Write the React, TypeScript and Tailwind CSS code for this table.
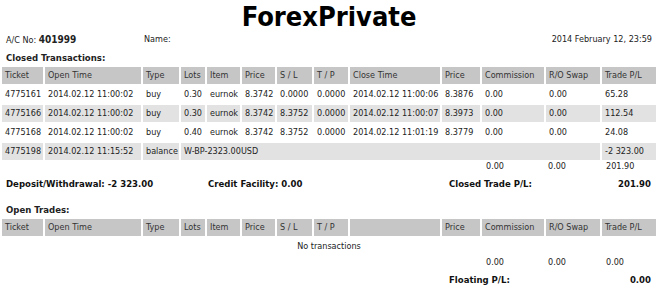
import React from "react";

const colCls = [
  "w-[41px]",
  "w-[96px]",
  "w-[36px]",
  "w-[24px]",
  "w-[33px]",
  "w-[33px]",
  "w-[35px]",
  "w-[34px]",
  "w-[90px]",
  "w-[38px]",
  "w-[62px]",
  "w-[54px]",
  "w-[54px]",
];

const th = "h-[17px] px-[3px] py-0 bg-[#c6c6c6] text-[#333] font-normal text-left whitespace-nowrap overflow-hidden";
const td = "h-[17px] px-[3px] py-0 text-[#222] whitespace-nowrap overflow-hidden";

const closedHead = ["Ticket", "Open Time", "Type", "Lots", "Item", "Price", "S / L", "T / P", "Close Time", "Price", "Commission", "R/O Swap", "Trade P/L"];
const openHead = ["Ticket", "Open Time", "Type", "Lots", "Item", "Price", "S / L", "T / P", "", "Price", "Commission", "R/O Swap", "Trade P/L"];

const rows = [
  ["4775161", "2014.02.12 11:00:02", "buy", "0.30", "eurnok", "8.3742", "0.0000", "0.0000", "2014.02.12 11:00:06", "8.3876", "0.00", "0.00", "65.28"],
  ["4775166", "2014.02.12 11:00:02", "buy", "0.30", "eurnok", "8.3742", "8.3752", "0.0000", "2014.02.12 11:00:07", "8.3973", "0.00", "0.00", "112.54"],
  ["4775168", "2014.02.12 11:00:02", "buy", "0.40", "eurnok", "8.3742", "8.3752", "0.0000", "2014.02.12 11:01:19", "8.3779", "0.00", "0.00", "24.08"],
];

function Cols() {
  return (
    <colgroup>
      {colCls.map((c, i) => (
        <col key={i} className={c} />
      ))}
    </colgroup>
  );
}

function SummaryNums({ a, b, c }: { a: string; b: string; c: string }) {
  return (
    <div className="flex h-[11px] items-center leading-[11px] text-[#222]">
      <div className="w-[486px] shrink-0" />
      <div className="w-[62px] shrink-0">{a}</div>
      <div className="w-[58px] shrink-0">{b}</div>
      <div>{c}</div>
    </div>
  );
}

export default function App() {
  return (
    <div className="w-[658px] h-[288px] overflow-hidden bg-white text-[9px] font-['DejaVu_Sans_Condensed','DejaVu_Sans',sans-serif] text-[#222]">
      <div className="h-[33px] flex items-center justify-center text-[27px] font-bold text-black leading-none">
        ForexPrivate
      </div>
      <div className="h-[14px] flex items-center px-[6px]">
        <div className="w-[138px]">
          A/C No: <span className="font-bold text-[10px]">401999</span>
        </div>
        <div className="flex-1">Name:</div>
        <div className="pr-[0px]">2014 February 12, 23:59</div>
      </div>
      <div className="h-[14px] mt-[4px] flex items-center px-[6px] font-bold text-[9.5px]">Closed Transactions:</div>
      <table className="w-[658px] table-fixed border-separate border-spacing-[2px] leading-[17px]">
        <Cols />
        <thead>
          <tr>
            {closedHead.map((h, i) => (
              <th key={i} className={th}>
                {h}
              </th>
            ))}
          </tr>
        </thead>
        <tbody>
          {rows.map((r, ri) => (
            <tr key={ri} className={ri === 1 ? "bg-[#e2e2e2]" : ""}>
              {r.map((c, ci) => (
                <td key={ci} className={td}>
                  {c}
                </td>
              ))}
            </tr>
          ))}
          <tr className="bg-[#e2e2e2]">
            <td className={td}>4775198</td>
            <td className={td}>2014.02.12 11:15:52</td>
            <td className={td}>balance</td>
            <td className={td} colSpan={9}>
              W-BP-2323.00USD
            </td>
            <td className={td}>-2 323.00</td>
          </tr>
        </tbody>
      </table>
      <div className="-mt-[1px]">
        <SummaryNums a="0.00" b="0.00" c="201.90" />
      </div>
      <div className="h-[14px] mt-[5px] flex items-center font-bold text-[9.5px] text-[#111]">
        <div className="w-[208px] pl-[6px] shrink-0">Deposit/Withdrawal: -2 323.00</div>
        <div className="w-[241px] shrink-0">Credit Facility: 0.00</div>
        <div className="flex-1">Closed Trade P/L:</div>
        <div className="pr-[7px]">201.90</div>
      </div>
      <div className="h-[14px] mt-[12px] flex items-center px-[6px] font-bold text-[9.5px]">Open Trades:</div>
      <table className="w-[658px] table-fixed border-separate border-spacing-[2px] leading-[17px]">
        <Cols />
        <thead>
          <tr>
            {openHead.map((h, i) => (
              <th key={i} className={th}>
                {h}
              </th>
            ))}
          </tr>
        </thead>
        <tbody>
          <tr>
            <td colSpan={13} className={td + " text-center"}>
              No transactions
            </td>
          </tr>
        </tbody>
      </table>
      <SummaryNums a="0.00" b="0.00" c="0.00" />
      <div className="h-[14px] mt-[5px] flex items-center font-bold text-[9.5px] text-[#111]">
        <div className="w-[449px] shrink-0" />
        <div className="flex-1">Floating P/L:</div>
        <div className="pr-[7px]">0.00</div>
      </div>
    </div>
  );
}
